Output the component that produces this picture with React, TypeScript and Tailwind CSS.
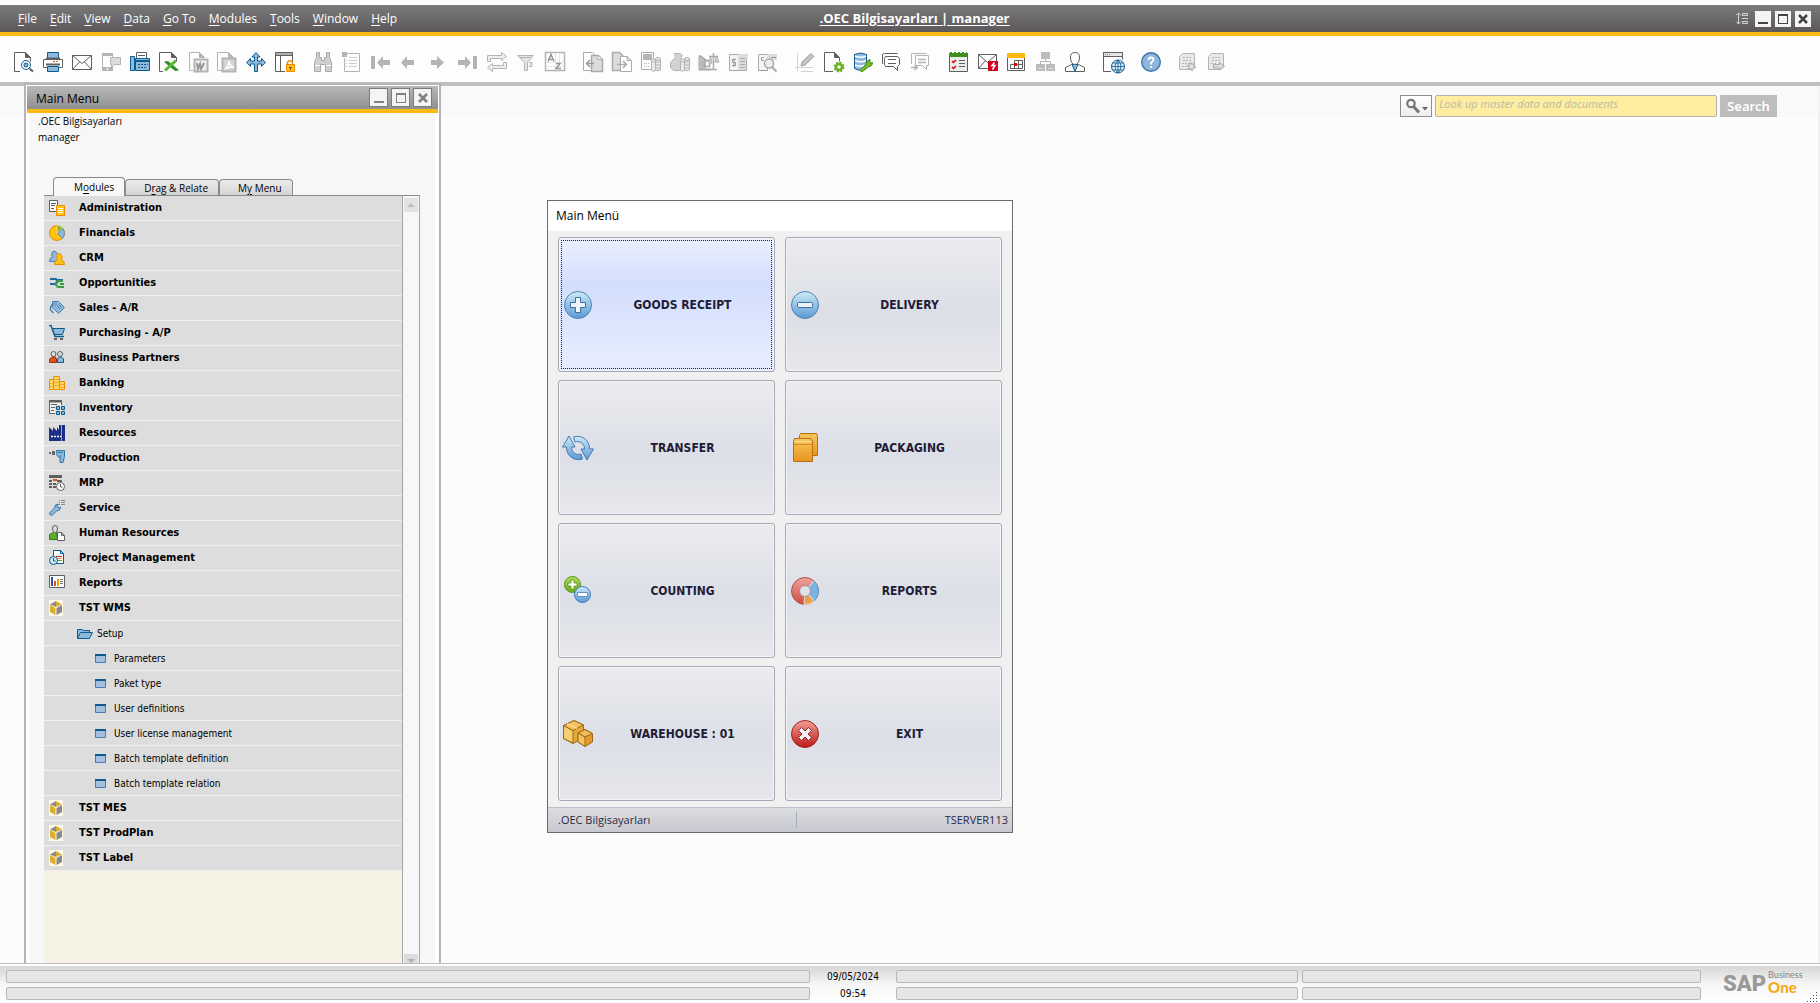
import { useState } from 'react';
import type { ReactNode } from 'react';

interface MenuItem {
  label: string;
  icon: string;
  level: number;
}

interface Tile {
  label: string;
  icon: string;
}

const G = '#b4b4b4'; // disabled icon
const L = '#dcdcdc'; // disabled fill
const D = '#5f5f5f';
const B = '#0b5b8f';
const S = '#8fb8dd';

const MENUS: [string, string, string][] = [
  ['', 'F', 'ile'],
  ['', 'E', 'dit'],
  ['', 'V', 'iew'],
  ['', 'D', 'ata'],
  ['', 'G', 'o To'],
  ['', 'M', 'odules'],
  ['', 'T', 'ools'],
  ['', 'W', 'indow'],
  ['', 'H', 'elp'],
];

const TABS: [string, string, string][] = [
  ['M', 'o', 'dules'],
  ['D', 'r', 'ag & Relate'],
  ['M', 'y', ' Menu'],
];

const TOOL_GROUPS: string[][] = [
  ['Preview', 'Print', 'Mail', 'SMS', 'Fax', 'Excel', 'Word', 'PDF', 'Launch', 'Lock'],
  ['Find', 'Add', 'First', 'Previous', 'Next', 'Last', 'Refresh', 'Filter', 'Sort'],
  ['Base', 'Target', 'Profit', 'Payment', 'Volume', 'Journal', 'Journal Preview'],
  ['Edit Layout', 'Settings', 'Query', 'Messages', 'Reply'],
  ['Tasks', 'Alerts', 'Calendar', 'Org Chart', 'Employee'],
  ['Browser'],
  ['Help'],
  ['Customize', 'Export'],
];

const ITEMS: MenuItem[] = [
  { label: 'Administration', icon: 'admin', level: 0 },
  { label: 'Financials', icon: 'pie', level: 0 },
  { label: 'CRM', icon: 'crm', level: 0 },
  { label: 'Opportunities', icon: 'opp', level: 0 },
  { label: 'Sales - A/R', icon: 'tag', level: 0 },
  { label: 'Purchasing - A/P', icon: 'cart', level: 0 },
  { label: 'Business Partners', icon: 'partners', level: 0 },
  { label: 'Banking', icon: 'bank', level: 0 },
  { label: 'Inventory', icon: 'inventory', level: 0 },
  { label: 'Resources', icon: 'factory', level: 0 },
  { label: 'Production', icon: 'drill', level: 0 },
  { label: 'MRP', icon: 'mrp', level: 0 },
  { label: 'Service', icon: 'wrench', level: 0 },
  { label: 'Human Resources', icon: 'hr', level: 0 },
  { label: 'Project Management', icon: 'project', level: 0 },
  { label: 'Reports', icon: 'reports', level: 0 },
  { label: 'TST WMS', icon: 'cube', level: 0 },
  { label: 'Setup', icon: 'folder', level: 1 },
  { label: 'Parameters', icon: 'form', level: 2 },
  { label: 'Paket type', icon: 'form', level: 2 },
  { label: 'User definitions', icon: 'form', level: 2 },
  { label: 'User license management', icon: 'form', level: 2 },
  { label: 'Batch template definition', icon: 'form', level: 2 },
  { label: 'Batch template relation', icon: 'form', level: 2 },
  { label: 'TST MES', icon: 'cube', level: 0 },
  { label: 'TST ProdPlan', icon: 'cube', level: 0 },
  { label: 'TST Label', icon: 'cube', level: 0 },
];

const TILES: Tile[] = [
  { label: 'GOODS RECEIPT', icon: 'plus' },
  { label: 'DELIVERY', icon: 'minus' },
  { label: 'TRANSFER', icon: 'transfer' },
  { label: 'PACKAGING', icon: 'packaging' },
  { label: 'COUNTING', icon: 'counting' },
  { label: 'REPORTS', icon: 'donut' },
  { label: 'WAREHOUSE : 01', icon: 'boxes' },
  { label: 'EXIT', icon: 'exit' },
];

const coins = (
  <g fill="#e8e8e8" stroke={G}>
    <path d="M10.500 8.500v10q2 1.500 4 0v-10z" />
    <ellipse cx="12.500" cy="8.500" rx="2.500" ry="1.500" />
    <path d="M14.500 7v11q2.500 1.500 5 0v-11z" />
    <ellipse cx="17" cy="7" rx="2.500" ry="1.500" />
    <path d="M14.500 10h5M14.500 13h5M14.500 16h5" />
  </g>
);

// 20x20 toolbar drawings
const toolIcons: Record<string, ReactNode> = {
  Preview: (
    <g fill="none" stroke={D}>
      <path d="M6 19.500H.5V.5h11l5 5v4" />
      <path d="M11.500 .5v5h5z" fill={D} />
      <circle cx="12" cy="13" r="4.500" stroke={B} fill="#fff" />
      <circle cx="12" cy="13" r="2" stroke={B} fill={S} />
      <path d="M15.500 16.500l3.500 3" stroke={D} strokeWidth="2" />
    </g>
  ),
  Print: (
    <g>
      <path d="M4.500 .5h11v6h-11z" fill={S} stroke={B} />
      <path d="M.5 7.500h19v8H.5z" fill="#fff" stroke={D} />
      <path d="M3 6.500h14" stroke={D} strokeWidth="2" />
      <path d="M10 9.500h2" stroke="#d33" />
      <path d="M13 9.500h2" stroke="#6a3" />
      <path d="M3 12.500h14" stroke={D} strokeWidth="2" />
      <path d="M4.500 14.500h11v5h-11z" fill={S} stroke={B} />
    </g>
  ),
  Mail: (
    <g fill="#fff" stroke={D}>
      <path d="M.5 3.500h19v14H.5z" />
      <path d="M.5 3.500l9.500 8 9.500-8M.5 17.500l7-7.500M19.500 17.500l-7-7.500" fill="none" />
    </g>
  ),
  SMS: (
    <g>
      <path d="M1.500 1.500h10v17h-10z" fill="#fff" stroke={G} />
      <path d="M1 1h11v3H1zM1 15h11v4H1z" fill={G} />
      <circle cx="6.500" cy="17" r="1" fill="#fff" />
      <path d="M9.500 5.500h10v7h-6l-3 3v-3h-1z" fill={L} stroke={G} />
    </g>
  ),
  Fax: (
    <g>
      <path d="M6.500 .5h10v7h-10z" fill="#fff" stroke={D} />
      <path d="M8 3.500h7" stroke={D} />
      <path d="M.5 4.500h4v14h-4z" fill={S} stroke={B} />
      <path d="M5.500 6.500h14v12h-14z" fill={S} stroke={B} />
      <path d="M6 9h13" stroke={B} strokeWidth="2" />
      <path d="M8 12.500h2m1 0h2m1 0h2M8 15.500h2m1 0h2m1 0h2" stroke={B} />
      <path d="M17 12.500h1" stroke="#e33" />
    </g>
  ),
  Excel: (
    <g fill="none" stroke={D}>
      <path d="M4 19.500H.5V.5h12l5 5v4" />
      <path d="M12.500 .5v5h5z" fill={D} />
      <path d="M6 9.500l11 9M8 9.500l11 9" stroke="#2f8f2f" strokeWidth="2" />
      <path d="M17 8.500l-11 10" stroke="#5cb531" strokeWidth="3" />
    </g>
  ),
  Word: (
    <g fill="none" stroke={G}>
      <path d="M5 18.500H1.500V.5h10l5 5" />
      <path d="M11.500 .5v5h5z" fill={G} />
      <path d="M6.500 7.500h13v12h-13z" fill="#eee" strokeWidth="2" />
      <path d="M9 11l1 6 2-5 1 5 3-6" stroke="#999" strokeWidth="2" />
    </g>
  ),
  PDF: (
    <g fill="none" stroke={G}>
      <path d="M5 18.500H.5V.5h11l5 5" />
      <path d="M11.500 .5v5h5z" fill={G} />
      <path d="M5.500 6.500h13v13h-13z" fill="#d4d4d4" strokeWidth="2" />
      <path d="M8 17q4-3 4-8 1 6 5 6-5-.5-9 2" stroke="#fff" strokeWidth="1.500" />
    </g>
  ),
  Launch: (
    <path
      d="M10 .5l4 4.500h-2.500v4H15.500V6.500l4 4-4 4V12H11.500v7.500h-3V12H4.500v2.500l-4-4 4-4V9h4V5H6z"
      fill={S}
      stroke={B}
    />
  ),
  Lock: (
    <g>
      <path d="M.5 .5h17v19H.5z" fill="#fff" stroke={D} />
      <path d="M0 0h18v4H0z" fill={D} />
      <path d="M1 2h16" stroke="#fff" />
      <path d="M5.500 4v15" stroke={D} />
      <path d="M10 9h10v11H10z" fill="#fff" />
      <path d="M12.500 12v-2q3-2.500 5 0v2" fill="none" stroke="#e88a00" strokeWidth="1.500" />
      <path d="M11.500 12.500h8v7h-8z" fill="#ffc20e" stroke="#e88a00" />
      <path d="M14 15.500h3M15.500 15v3" stroke="#844" />
    </g>
  ),
  Find: (
    <g fill="#cfcfcf" stroke="#aaa">
      <path d="M3.500 .5h3v5h2v3h3v-3h2v-5h3v5l2 5v9h-6v-7h-5v7h-6v-9l2-5z" />
      <path d="M2 13.500h5M13 13.500h5" stroke="#fff" />
    </g>
  ),
  Add: (
    <g fill="none" stroke={G}>
      <path d="M4 1.500h13.500v18H2.500V6" />
      <path d="M0 0h5v5H0z" fill={G} stroke="none" />
      <path d="M7 5.500h8M7 8.500h8M7 11.500h8M7 14.500h8" stroke="#ccc" />
      <path d="M4 8.500h1M4 11.500h1M4 14.500h1" />
    </g>
  ),
  First: <path d="M0 4h4v13H0zM6 10.500L12 4v4h7v5h-7v4z" fill={G} />,
  Previous: <path d="M1 10.500L7 4v4h7v5H7v4z" fill={G} />,
  Next: <path d="M15 10.500L8 4v4H2v5h6v4z" fill={G} />,
  Last: <path d="M15 4h4v13h-4zM13 10.500L7 4v4H0v5h7v4z" fill={G} />,
  Refresh: (
    <path
      d="M.5 9.500V3.500h14V.5l5 4-5 4V6.500h-11v3zM19.500 10.500v6h-14v3l-5-4 5-4v2h11v-3z"
      fill="#eee"
      stroke={G}
    />
  ),
  Filter: (
    <path d="M1.500 3.500h16l-6 7v8h-3v-8zM4 5.500h11M13 10.500h3v4h-3" fill="#e4e4e4" stroke={G} />
  ),
  Sort: (
    <g fill="none" stroke={G}>
      <path d="M.5 .5h19v18H.5z" fill="#fff" strokeWidth="1.500" />
      <path d="M10.500 2v15M2 10.500h16M2 14.500h16M14.500 2v15" stroke="#e5e5e5" />
      <path d="M3 9.500l3-7 3 7M4 7.500h4" stroke="#999" strokeWidth="1.500" />
      <path d="M11 11.500h4l-4 5h5" stroke="#999" strokeWidth="1.500" />
    </g>
  ),
  Base: (
    <g stroke="#aaa">
      <path d="M.5 .5h9l3 3v15H.5z" fill="#fff" />
      <path d="M8.500 3.500h7l4 4v12h-11z" fill={L} strokeWidth="1.500" />
      <path d="M15 3.500v4h4" fill="#fff" />
      <path d="M3 11.500h8M7 8l-3.500 3.500L7 15" fill="none" stroke="#999" strokeWidth="1.500" />
    </g>
  ),
  Target: (
    <g stroke="#aaa">
      <path d="M.5 .5h7l4 4v14H.5z" fill={L} strokeWidth="1.500" />
      <path d="M8.500 4.500h7l4 4v11h-11z" fill="#fff" />
      <path d="M15 4.500v4h4" fill={L} />
      <path d="M5 12.500h9M11 9l3.500 3.500L11 16" fill="none" strokeWidth="1.500" />
    </g>
  ),
  Profit: (
    <g>
      <path d="M.5 .5h12v17H.5z" fill="#fff" stroke="#aaa" />
      <path d="M2 2h9v6H2z" fill={G} />
      <path d="M3 11.500h6M3 14.500h6" stroke={G} strokeDasharray="1 1" />
      {coins}
    </g>
  ),
  Payment: (
    <g>
      <path d="M4.500 1.500h6l2 2-2 3 4 5v6l-3 1h-8l-3-3v-5l5-5z" fill="#d2d2d2" stroke={G} />
      {coins}
    </g>
  ),
  Volume: (
    <g fill="none" stroke="#aaa">
      <path d="M.5 3.500l8 6M.5 3.500v14h11" strokeWidth="2" />
      <path d="M0 4l7 6v7H0z" fill="#bbb" stroke="none" />
      <path d="M5.500 8.500h5v6h-5zM14.500 1v17M11 17.500h7M10 4.500h9" strokeWidth="1.500" />
      <path d="M11.500 5l-1.500 6h3zM17.500 4l-1.500 6h4z" fill={L} />
    </g>
  ),
  Journal: (
    <g fill="none" stroke="#aaa">
      <path d="M1.500 2.500h9v16h-9zM10.500 2.500h8v16h-8z" fill="#f4f4f4" />
      <path d="M10 2h10v5h-2v11h-8z" fill={L} stroke="none" />
      <path d="M12 6.500h5M12 9.500h5M12 12.500h5M12 15.500h5" />
      <path d="M8 7.500H4.500v3h3v3H4M6 6v9" stroke="#999" />
    </g>
  ),
  'Journal Preview': (
    <g fill="none" stroke="#aaa">
      <path d="M1.500 2.500h9v16h-9z" fill="#f4f4f4" />
      <path d="M10 2h10v6h-3v7h-7z" fill={L} stroke="none" />
      <path d="M1.500 18.500h9M7 5.500H4.500v3H7M14 5.500h5" stroke="#999" />
      <circle cx="12" cy="11.500" r="4.500" fill="#eee" strokeWidth="1.500" />
      <path d="M15 15l4.500 4.500" strokeWidth="2" />
    </g>
  ),
  'Edit Layout': (
    <g fill="none" stroke="#cfd8cf">
      <path d="M2.500 1v18M0 15.500h18M6 19.500h12" />
      <path d="M6 14l1-4 9-8.500 3 3L10 13z" fill="#c4c4c4" stroke="#a0a0a0" />
    </g>
  ),
  Settings: (
    <g fill="none" stroke={D}>
      <path d="M9 19.500H.5V.5h10l5 5v4" />
      <path d="M10.500 .5v5h5z" fill={D} />
      <circle cx="15" cy="15" r="3" stroke="#6ab023" strokeWidth="2.500" />
      <circle cx="15" cy="15" r="4.500" stroke="#6ab023" strokeWidth="2" strokeDasharray="2 1.530" />
    </g>
  ),
  Query: (
    <g>
      <path d="M1.500 2.500v14q6 3.500 12 0v-14q-6-3-12 0z" fill={S} stroke={B} />
      <path d="M2 4q6 2.500 11 0M2 8.500q6 2.500 11 0M2 13q6 2.500 9 0" fill="none" stroke="#fff" strokeWidth="1.500" />
      <path d="M7 18.500l6-6q0-4 4-5v4l2.500-1q0 4-4.500 4.500l-6 5z" fill="#7dc023" stroke="#3e8a1c" />
    </g>
  ),
  Messages: (
    <g fill="#fff" stroke={D}>
      <path d="M.5 12V2.500l2-1h13" fill="none" />
      <path d="M3.500 4.500h12l2 2v6l-2 2v4l-4-4h-8l-1-2v-6z" />
      <path d="M6 7.500h8M6 11.500h8" />
    </g>
  ),
  Reply: (
    <g fill="#fff" stroke={G}>
      <path d="M.5 12V1.500h15" fill="none" />
      <path d="M4.500 3.500h13v10h-2v4l-4-4h-7z" />
      <path d="M7 7.500h8M7 10.500h8M0 15.500h6M3.500 13l3 2.500-3 2.500" fill="none" strokeWidth="1.500" />
    </g>
  ),
  Tasks: (
    <g fill="none">
      <path d="M.5 1.500h18v18H.5z" fill="#ececec" stroke={D} />
      <path d="M0 1h19v4H0z" fill="#3f8f1f" />
      <path d="M1 .5h17" stroke="#3f8f1f" strokeDasharray="2 2" />
      <path d="M3 9l1.500 1.500L7 8M3 15l1.500 1.500L7 14" stroke="#d00" strokeWidth="1.500" />
      <path d="M10 8.500h6M10 11.500h6M10 14.500h6" stroke={D} />
    </g>
  ),
  Alerts: (
    <g>
      <path d="M.5 2.500h18v14H.5zM.5 2.500l9 8 9-8M.5 16.500l7-8" fill="#fff" stroke={D} />
      <path d="M10 9h10v10H10z" fill="#d0021b" />
      <path d="M16.500 10.500l-2.500 3h3l-2.500 4" fill="none" stroke="#fff" strokeWidth="1.500" />
    </g>
  ),
  Calendar: (
    <g>
      <path d="M.5 2.500h17v16H.5z" fill="#fff" stroke={D} />
      <path d="M0 1h18v5H0z" fill="#fdb913" />
      <path d="M3.500 12.500h12v4h-12zM7.500 8.500h8v4h-8zM7.500 12v4M11.500 8v8" fill="none" stroke={D} />
      <path d="M7 11h3v3H7z" fill="#d00" />
    </g>
  ),
  'Org Chart': (
    <g fill="#bcbcbc">
      <path d="M5 0h9v7H5zM0 12h9v7H0zM10 12h9v7h-9z" />
      <path d="M9.500 7v3M4.500 12v-2.500h10V12" fill="none" stroke={G} />
      <path d="M2 16.500h5M12 16.500h5" stroke="#ddd" />
    </g>
  ),
  Employee: (
    <g fill="#fff" stroke={D}>
      <path d="M.5 19.500v-4l6-3h7l6 3v4z" />
      <path d="M7 12.500l3 7 3-7z" fill={S} stroke={B} />
      <path d="M10 .5q5 0 4.500 5.500Q14 12.500 10 12.500T5.500 6Q5 .5 10 .5z" />
    </g>
  ),
  Browser: (
    <g fill="none">
      <path d="M8 19.500H.5V.5h19v7" stroke={D} />
      <path d="M.5 .5h19v4H.5z" fill="#e5e5e5" stroke={D} />
      <path d="M2 2.500h1m1 0h1m1 0h1" stroke="#6a3" />
      <circle cx="15" cy="14.500" r="6.500" fill="#dceaf6" stroke={B} />
      <path d="M8.500 14.500h13M10 11h10M10 18h10M15 8v13M15 8q-6 6.500 0 13M15 8q6 6.500 0 13" stroke={B} strokeWidth=".8" />
    </g>
  ),
  Help: (
    <g>
      <circle cx="10" cy="10" r="9.300" fill="#8db4da" stroke="#3a76a8" strokeWidth="1.400" />
      <path d="M7.500 8q0-2.500 2.500-2.500t2.500 2.300Q12.500 9.500 10 10.500v2M10 14v2" fill="none" stroke="#fff" strokeWidth="1.800" />
    </g>
  ),
  Customize: (
    <g>
      <path d="M.5 4.500l3-3h12v13l-3 3H.5z" fill="#e9e9e9" stroke={G} />
      <path d="M4 5.500h9M4 8.500h9M3 11.500h9M3 14.500h7" stroke={G} strokeDasharray="2 1" />
      <circle cx="12.500" cy="14.500" r="3" fill="none" stroke="#b0b0b0" strokeWidth="2.500" strokeDasharray="2 1" />
    </g>
  ),
  Export: (
    <g>
      <path d="M.5 4.500l3-3h12v13l-3 3H.5z" fill="#e9e9e9" stroke={G} />
      <path d="M4 5.500h9M4 8.500h9M3 11.500h5" stroke={G} strokeDasharray="2 1" />
      <path d="M5.500 12.500h6v-2l5 4-5 3.500v-2h-6z" fill="#ddd" stroke="#a8a8a8" />
    </g>
  ),
};

// 16x16 module drawings
const moduleIcons: Record<string, ReactNode> = {
  admin: (
    <g>
      <path d="M.5 .5h8v11h-8z" fill="#fff" stroke={D} />
      <path d="M2 3.500h5M2 5.500h4M2 8.500h3" stroke={D} />
      <path d="M7.500 5.500h8v10h-8z" fill="#ffc90e" stroke="#f08a00" />
      <path d="M9 8.500h5M9 10.500h5M9 12.500h5" stroke="#fff" />
    </g>
  ),
  pie: (
    <g>
      <circle cx="8" cy="8" r="7.500" fill="#ffc20e" stroke="#f08a00" />
      <path d="M8 8V.5q4 0 5.500 2.500z" fill="#7db928" stroke="#fff" strokeWidth=".5" />
      <path d="M8.500 8.500L13.500 3.500q4 5 0 10z" fill={S} stroke="#4a7fb0" strokeWidth=".7" />
    </g>
  ),
  crm: (
    <g>
      <path d="M.5 11.500q0-4 3-4.500Q2 5 3 2.500t4-.5 1 5q3 0 3 4.500z" fill={S} stroke="#4a7fb0" />
      <path d="M5.500 14.500q0-4 3-4.500Q7 7 8 4.500t4 0 0 5q3.500 1 3.500 5z" fill="#ffc20e" stroke="#f08a00" />
    </g>
  ),
  opp: (
    <g fill="none" strokeWidth="2">
      <path d="M1 4h6l2 4M1 9h6l2-4h5" stroke="#1d6ca5" />
      <path d="M14 6H9Q6 8 7 10t3 2h5M11 9h4" stroke="#3a9a48" />
    </g>
  ),
  tag: (
    <g>
      <path d="M3.500 1.500h6l6 6-6 6-6-6z" fill={S} stroke="#4a7fb0" />
      <circle cx="6" cy="4" r="1.200" fill="#fff" stroke={B} strokeWidth=".7" />
      <path d="M4 4Q1 6 1.500 10l3 3" fill="none" stroke="#4a7fb0" strokeWidth="1.500" />
      <path d="M8 6l3 3M9.500 4.500l3 3" stroke="#4a7fb0" />
    </g>
  ),
  cart: (
    <g>
      <path d="M0 .5h2l4 11h9" fill="none" stroke={B} strokeWidth="1.500" />
      <path d="M3.500 3.500h12l-2 6h-8z" fill={S} stroke={B} />
      <path d="M5 13h3v2H5zM11 13h3v2h-3z" fill="#666" />
    </g>
  ),
  partners: (
    <g>
      <circle cx="4.500" cy="4" r="2.500" fill="#ddd" stroke={D} />
      <circle cx="11" cy="4" r="2.500" fill="#ddd" stroke={D} />
      <path d="M.5 12.500V9l3-2h3l1 2v3.500z" fill="#d9531e" stroke="#a03010" />
      <path d="M8.500 12.500V9l2-2h2l2 2v3.500z" fill={S} stroke={B} />
    </g>
  ),
  bank: (
    <g fill="#ffd766" stroke="#f08a00">
      <path d="M4.500 1.500h6v13h-6z" />
      <path d="M.5 4.500h4v10h-4zM10.500 6.500h5v8h-5z" />
      <path d="M5 4.500h5M5 7.500h5M5 10.500h5M1 8.500h3M1 11.500h3M11 9.500h4M11 12.500h4" strokeWidth=".6" />
    </g>
  ),
  inventory: (
    <g>
      <path d="M.5 .5h12v13H.5z" fill="#f4f4f4" stroke={D} />
      <path d="M0 1.500h13" stroke={D} strokeWidth="2" />
      <path d="M2 4.500h6M2 7.500h4M2 10.500h3" stroke={D} />
      <path d="M6 5h10v11H6z" fill="#ddd" />
      <path d="M7.500 6.500h3v3h-3zM12.500 6.500h3v3h-3zM7.500 11.500h3v3h-3zM12.500 11.500h3v3h-3z" fill={S} stroke={B} />
    </g>
  ),
  factory: (
    <g>
      <path d="M0 16V2l4 4V2l4 4V2l2 3V0h2v7h1V0h3v16z" fill="#1c2f87" />
      <path d="M2 11.500h10" stroke="#fff" strokeWidth="1.500" strokeDasharray="2 1" />
      <path d="M12.500 0v16" stroke="#8fa8dd" />
    </g>
  ),
  drill: (
    <g>
      <path d="M0 2h2v2H0zM3 1h3v4H3z" fill="#666" />
      <path d="M7.500 .5h8v6l-1.500 6h-3v-4l-3-3z" fill={S} stroke="#2f77a8" />
      <path d="M9 2.500h5M11 5v3" stroke="#2f77a8" />
    </g>
  ),
  mrp: (
    <g>
      <path d="M0 0h13v3H0z" fill={D} />
      <path d="M0 5h3v2H0zM8 5h5v2H8zM0 8h3v2H0zM4 8h3v2H4zM0 11h3v2H0zM4 11h3v2H4z" fill={D} />
      <path d="M4 4h4v2H4z" fill="#e0561a" />
      <circle cx="11.500" cy="11.500" r="4" fill="#fff" stroke={D} />
      <path d="M11.500 9v3h2" fill="none" stroke={D} />
    </g>
  ),
  wrench: (
    <g>
      <path d="M.5 13l5-5q0-4 4-4L8 6.500 10 8l1.500-1q0 4-4 4L3 15.500q-2 0-2.500-2.500z" fill={S} stroke="#2f77a8" />
      <path d="M10 .5h1m1 0h4M10 2.500h1m1 0h4M10 4.500h1m1 0h4" stroke="#888" />
    </g>
  ),
  hr: (
    <g>
      <path d="M.5 14.500v-5l4-2h3l1 7z" fill="#5fae2c" stroke="#2f7a1c" />
      <path d="M6 .5q3 0 2.500 3.500Q8 8 6 8T3.500 4Q3 .5 6 .5z" fill="#ddd" stroke={D} />
      <path d="M8.500 7.500h4l3 3v5h-7zM12.500 7.500v3h3" fill="#fff" stroke={D} />
    </g>
  ),
  project: (
    <g>
      <path d="M4.500 .5h7l3 3v10h-10zM11.500 .5v3h3" fill="#fff" stroke={B} />
      <path d="M7 6.500h6" stroke="#d22" />
      <path d="M8 8.500h5" stroke="#f90" />
      <path d="M8 10.500h5" stroke="#3a3" />
      <circle cx="4.500" cy="10.500" r="4" fill="#d4e5f4" stroke={B} />
      <path d="M4.500 8v3h2" fill="none" stroke={B} />
    </g>
  ),
  reports: (
    <g>
      <path d="M.5 .5h15v12H.5z" fill="#fff" stroke={D} />
      <path d="M3 2v9" stroke="#1e5aa0" strokeWidth="2" />
      <path d="M6 6v5" stroke="#d9531e" strokeWidth="2" />
      <path d="M9 4v7" stroke="#f5a100" strokeWidth="2" />
      <path d="M11 4.500h3M11 6.500h3M11 8.500h3" stroke="#777" />
    </g>
  ),
  cube: (
    <g>
      <path d="M0 0h14v16H0z" fill="#fdf8e8" />
      <path d="M7 1v6L1 4.500z" fill="#8a8a8a" />
      <path d="M7 1l6 3.500L7 7z" fill="#dfae28" />
      <path d="M1 5l5.500 3v7L1 12z" fill="#dfae28" />
      <path d="M13 5L7.500 8v7l5.500-3z" fill="#8a8a8a" />
    </g>
  ),
  folder: (
    <g fill={S} stroke={B}>
      <path d="M.5 10.500v-9h5l1 1h6v2" />
      <path d="M.5 10.500l3-6h12l-3 6z" />
    </g>
  ),
  form: (
    <g>
      <path d="M.5 .5h10v8H.5z" fill="#a4c0de" stroke="#4a7ab0" />
      <path d="M0 1h11" stroke={B} strokeWidth="2" />
    </g>
  ),
};

// 32x32 tile drawings
const tileIcons: Record<string, ReactNode> = {
  plus: (
    <g>
      <circle cx="16" cy="16" r="13.500" fill="url(#blue)" stroke="#4f82b8" />
      <path d="M13.500 8.500h5v5h5v5h-5v5h-5v-5h-5v-5h5z" fill="#eef3fa" stroke="#3d6da8" strokeLinejoin="round" />
    </g>
  ),
  minus: (
    <g>
      <circle cx="16" cy="16" r="13.500" fill="url(#blue)" stroke="#4f82b8" />
      <rect x="8.500" y="13.500" width="15" height="5" rx="1" fill="#eef3fa" stroke="#3d6da8" />
    </g>
  ),
  transfer: (
    <g fill="url(#blue)" stroke="#4878b4" strokeLinejoin="round">
      <path d="M7 4l6 11H9.500A7 7 0 0 0 19 22l1.500 5A12 12 0 0 1 4.500 15H.5z" />
      <path d="M25 28l-6-11h3.500A7 7 0 0 0 13 10L11.500 5A12 12 0 0 1 27.500 17h4z" />
    </g>
  ),
  packaging: (
    <g stroke="#b86f10">
      <path d="M11.500 1.500h16l1 2v20h-18v-20z" fill="url(#orange)" />
      <path d="M5.500 6.500h16l2 3v20h-19v-20z" fill="url(#orange)" />
      <path d="M5 12.500h18.500" stroke="#d48a1c" />
      <path d="M5.500 9.500h17" stroke="#fbdf94" />
    </g>
  ),
  counting: (
    <g>
      <circle cx="10.500" cy="9.500" r="8" fill="url(#green)" stroke="#5b9414" />
      <path d="M9 5h3v3h3v3h-3v3H9v-3H6V8h3z" fill="#fff" stroke="#4d8a10" strokeWidth=".7" />
      <circle cx="20.500" cy="19.500" r="8" fill="url(#blue)" stroke="#3e78c0" />
      <path d="M15.500 17.500h10v4h-10z" fill="#fff" stroke="#3d6da8" strokeWidth=".7" />
    </g>
  ),
  donut: (
    <g>
      <circle cx="16" cy="16" r="13.500" fill="url(#red)" stroke="#a8544c" />
      <path d="M16 16L25 6A13.500 13.500 0 0 1 25 26z" fill="#78b4e2" stroke="#e8eef6" />
      <path d="M16 16L25 26A13.500 13.500 0 0 1 15 29.500z" fill="#e8a04c" stroke="#f4dcc0" />
      <path d="M25 6A13.500 13.500 0 0 1 25 26" fill="none" stroke="#4f82b8" />
      <circle cx="16" cy="16" r="5.500" fill="#dfe2ea" stroke="#b08a90" />
    </g>
  ),
  boxes: (
    <g stroke="#9a6a18" strokeLinejoin="round">
      <path d="M12 2.500l9.500 4.500v13L11 25.500 1.500 20.500V7.500z" fill="#e6a83a" />
      <path d="M1.500 7.500l9.500 5V25L1.500 20.500z" fill="#f6cf6c" />
      <path d="M12 2.500L21.500 7 11 12.500l-9.500-5z" fill="#f3c25c" />
      <path d="M5 5.500l10 5" stroke="#fbe7b4" />
      <path d="M23 11.500l7.500 4v8.500L23 28.500l-7-4.500v-9z" fill="#e29a2a" />
      <path d="M16 15l7 4v9.500L16 24z" fill="#f4c45c" />
      <path d="M23 11.500l7.500 4-7.500 3.500-7-4z" fill="#f0bb52" />
    </g>
  ),
  exit: (
    <g>
      <circle cx="16" cy="16" r="13.500" fill="url(#crimson)" stroke="#a82020" />
      <path
        d="M12.500 9.500l3.500 3.500 3.500-3.500 3 3-3.500 3.500 3.500 3.500-3 3-3.500-3.500-3.500 3.500-3-3 3.500-3.500-3.500-3.500z"
        fill="#f2f2f6"
        stroke="#9c2430"
        strokeLinejoin="round"
      />
    </g>
  ),
};

const gradients: [string, string, string][] = [
  ['blue', '#cdebf7', '#5a9ad2'],
  ['orange', '#f6c860', '#e8941c'],
  ['green', '#b4dc5c', '#6aa81c'],
  ['red', '#eea49c', '#cc4a40'],
  ['crimson', '#f0a096', '#bc1818'],
];

function Mnemonic({ parts }: { parts: [string, string, string] }) {
  return (
    <>
      {parts[0]}
      <span className="underline underline-offset-2">{parts[1]}</span>
      {parts[2]}
    </>
  );
}

function WindowGlyph({ kind, size }: { kind: string; size: number }) {
  return (
    <svg width={size} height={size} viewBox="0 0 12 12" fill="none" stroke="currentColor" shapeRendering="crispEdges">
      {kind === 'Minimize' && <path d="M1 10h10" strokeWidth="2" />}
      {kind === 'Maximize' && <path d="M1 1.500h10M1.500 1v10M10.500 1v10M1 10.500h10M1 2.500h10" />}
      {kind === 'Close' && <path d="M2 2l8 8M10 2l-8 8" strokeWidth="2.500" shapeRendering="auto" />}
    </svg>
  );
}

function TitleBar() {
  return (
    <header className="mt-[5px] flex h-[31px] items-center border-b-4 border-[#fdb913] bg-linear-to-b from-[#7b7b7a] to-[#5b575b] pr-[9px] pl-[18px] font-['Open_Sans',sans-serif] text-white">
      <nav className="flex flex-1 gap-[13px]">
        {MENUS.map((m) => (
          <button key={m[1]} className="text-xs">
            <Mnemonic parts={m} />
          </button>
        ))}
      </nav>
      <a href="#company" className="text-[13px] font-bold underline underline-offset-2">
        .OEC Bilgisayarları | manager
      </a>
      <div className="flex flex-1 items-center justify-end gap-1">
        <svg width="14" height="13" viewBox="0 0 14 13" fill="none" stroke="#d5d5d5" className="mr-0.5">
          <path d="M3.500 1v11M1 3.500L3.500 1 6 3.500M1 9.500L3.500 12 6 9.500M7 6.500h6" />
          <path d="M7.500 1.500h5v2h-5zM7.500 9.500h5v2h-5z" />
        </svg>
        {['Minimize', 'Maximize', 'Close'].map((k) => (
          <button key={k} aria-label={k} className="flex size-4 items-center justify-center bg-[#f4f4f4] text-[#444]">
            <WindowGlyph kind={k} size={12} />
          </button>
        ))}
      </div>
    </header>
  );
}

function Toolbar() {
  return (
    <div className="flex h-[50px] items-center gap-[18px] border-b-4 border-[#bfbfbf] bg-[#fdfdfd] px-[14px] pt-1.5">
      {TOOL_GROUPS.map((group, i) => (
        <div key={i} className="flex gap-[9px]">
          {group.map((name) => (
            <button key={name} aria-label={name} className="size-5">
              <svg width="20" height="20" viewBox="0 0 20 20" className="overflow-visible">
                {toolIcons[name]}
              </svg>
            </button>
          ))}
        </div>
      ))}
    </div>
  );
}

function SearchBar() {
  return (
    <div className="flex h-[31px] items-end justify-end gap-[3px] bg-[#f9f9f9] pr-[41px]">
      <button
        aria-label="Search scope"
        className="flex h-[22px] w-8 items-center justify-center gap-px border border-[#8e8e8e] bg-linear-to-b from-white to-[#eee]"
      >
        <svg width="16" height="16" viewBox="0 0 16 16" fill="none" stroke="#777">
          <circle cx="6" cy="5.500" r="3.700" strokeWidth="2.200" />
          <path d="M8.500 8.500l5.500 6" strokeWidth="3" />
        </svg>
        <svg width="6" height="4" viewBox="0 0 6 4" className="mt-1.5">
          <path d="M0 0h6L3 3.500z" fill="#666" />
        </svg>
      </button>
      <input
        aria-label="Search"
        placeholder="Look up master data and documents"
        className="h-[22px] w-[282px] rounded-xs border border-[#b3b3b3] bg-[#ffee9f] px-[3px] pb-[5px] font-['Open_Sans',sans-serif] text-[11px] italic outline-none placeholder:text-[#b9b9a8]"
      />
      <button className="h-[22px] w-[57px] bg-[#bdbdbd] font-['Noto_Sans',sans-serif] text-[13px] leading-none font-semibold text-white">
        Search
      </button>
    </div>
  );
}

function MenuRow({ item }: { item: MenuItem }) {
  const pad = item.level === 0 ? 'pl-[5px]' : item.level === 1 ? 'pl-[33px]' : 'pl-[51px]';
  const w = item.level === 0 ? 'w-[30px]' : item.level === 1 ? 'w-[20px]' : 'w-[19px]';
  const size = item.icon === 'form' ? 'h-[9px] w-[11px]' : item.icon === 'folder' ? 'h-[11px] w-4' : 'size-4';
  const box = item.icon === 'form' ? '0 0 11 9' : item.icon === 'folder' ? '0 0 16 11' : '0 0 16 16';
  return (
    <li>
      <button
        className={`flex h-[25px] w-full items-center border-b border-[#efefef] bg-[#dddddd] text-left font-['DejaVu_Sans_Condensed','DejaVu_Sans',sans-serif] text-black ${pad} ${
          item.level === 0 ? 'text-[11px] font-bold' : 'text-[10px]'
        }`}
      >
        <span className={w}>
          <svg viewBox={box} className={size}>
            {moduleIcons[item.icon]}
          </svg>
        </span>
        {item.label}
      </button>
    </li>
  );
}

function MainMenuWindow() {
  const [tab, setTab] = useState(0);

  return (
    <section className="absolute -top-[3px] bottom-0 left-[24px] flex w-[417px] flex-col overflow-hidden border-x-2 border-t-2 border-[#b5b5b5] bg-white px-px pt-px">
      <div className="flex h-[27px] shrink-0 items-center gap-[3px] border-b-4 border-[#fdb913] bg-linear-to-b from-[#b9b9b9] to-[#8f8f8f] pr-1.5 pl-[9px]">
        <h2 className="flex-1 pt-0.5 font-['Open_Sans',sans-serif] text-xs text-black">Main Menu</h2>
        {['Minimize', 'Maximize', 'Close'].map((k) => (
          <button
            key={k}
            aria-label={k}
            className="flex size-[19px] items-center justify-center border border-[#7c7c7c] bg-[#f4f4f4] text-[#808080]"
          >
            <WindowGlyph kind={k} size={12} />
          </button>
        ))}
      </div>

      <div className="mx-[3px] flex min-h-0 flex-1 flex-col bg-[#f7f7f7] pr-[15px] pl-[14px]">
        <div className="-ml-1.5 flex h-16 shrink-0 flex-col font-['Open_Sans',sans-serif] text-[10px] leading-4 text-black">
          <span>.OEC Bilgisayarları</span>
          <span>manager</span>
        </div>

        <div className="flex h-[19px] shrink-0 items-end border-b border-[#8a8a8a] pl-[9px]">
          {TABS.map((t, i) => (
            <button
              key={t[2]}
              onClick={() => setTab(i)}
              className={`rounded-t border border-b-0 border-[#8a8a8a] pr-2.5 font-['Open_Sans',sans-serif] text-[10px] leading-none text-black ${
                tab === i ? '-mb-px h-[19px] bg-[#f7f7f7] pl-5' : 'h-4 bg-linear-to-b from-[#ececec] to-[#d4d4d4] pl-[18px]'
              }`}
            >
              <Mnemonic parts={t} />
            </button>
          ))}
        </div>

        <div className="flex min-h-0 flex-1">
          <ul className="flex-1 overflow-hidden bg-[#f5f2e4]">
            {ITEMS.map((item) => (
              <MenuRow key={item.label} item={item} />
            ))}
          </ul>
          <div className="flex w-[18px] flex-col items-center justify-between border-x border-[#a5a5a5] bg-[#f7f7f7] pt-0.5">
            <button aria-label="Scroll up" className="flex size-[14px] items-center justify-center bg-[#e2e2e2]">
              <svg width="8" height="4" viewBox="0 0 8 4">
                <path d="M4 0l4 4H0z" fill="#bdbdbd" />
              </svg>
            </button>
            <button aria-label="Scroll down" className="flex h-[9px] w-[14px] items-end justify-center bg-[#dcdcdc]">
              <svg width="8" height="4" viewBox="0 0 8 4">
                <path d="M0 0h8L4 4z" fill="#b0b0b0" />
              </svg>
            </button>
          </div>
        </div>
      </div>
    </section>
  );
}

function WmsWindow() {
  const [focused, setFocused] = useState(0);

  return (
    <section className="absolute top-[114px] left-[547px] flex w-[466px] flex-col border border-[#6b6b6b] bg-[#f0f0f0] font-['Open_Sans',sans-serif]">
      <h2 className="flex h-[30px] items-center bg-white pl-2 text-xs text-black">Main Menü</h2>
      <div className="grid grid-cols-2 gap-x-[10px] gap-y-2 px-[10px] py-1.5">
        {TILES.map((tile, i) => (
          <button
            key={tile.label}
            onClick={() => setFocused(i)}
            className={`flex h-[135px] rounded-[3px] border border-[#a6a9b4] p-0.5 font-['DejaVu_Sans_Condensed','DejaVu_Sans',sans-serif] text-xs font-bold text-[#1e1c36] shadow-[inset_0_0_0_1px_#f4f5f8] ${
              focused === i
                ? 'bg-linear-to-b from-[#ebf0fe] via-[#d3defc] via-35% to-[#e8eefe]'
                : 'bg-linear-to-b from-[#ebecef] via-[#dcdfe7] via-55% to-[#e7e8ec]'
            }`}
          >
            <span
              className={`flex size-full items-center border border-dotted ${
                focused === i ? 'border-[#1e1c36]' : 'border-transparent'
              }`}
            >
              <svg width="32" height="32" viewBox="0 0 32 32">
                {tileIcons[tile.icon]}
              </svg>
              <span className="flex-1">{tile.label}</span>
            </span>
          </button>
        ))}
      </div>
      <footer className="grid h-[25px] grid-cols-[238px_1fr] items-center border-t border-[#bcbec8] bg-linear-to-b from-[#dcdde2] to-[#c8c9d0] pr-1 pl-[10px] text-[11px] text-[#2b2940]">
        <span>.OEC Bilgisayarları</span>
        <span className="border-l border-[#a9abb5] text-right leading-4">TSERVER113</span>
      </footer>
    </section>
  );
}

function StatusField() {
  return <div className="h-[13px] rounded-xs border border-[#b8b8b8] bg-[#e6e6e6]" />;
}

function StatusBar() {
  return (
    <footer className="h-10 border-t border-[#bfbfbf] bg-white pt-0.5">
      <div className="flex h-full bg-linear-to-b from-[#d6d6d6] via-[#f6f6f6] via-50% to-white pt-1 pl-1.5">
        <div className="flex flex-[804] flex-col gap-1">
          <StatusField />
          <StatusField />
        </div>
        <div className="-mt-0.5 flex w-[86px] flex-col text-center font-['DejaVu_Sans_Condensed','DejaVu_Sans',sans-serif] text-[10px] leading-[17px] text-black">
          <time>09/05/2024</time>
          <time>09:54</time>
        </div>
        <div className="flex flex-[402] flex-col gap-1">
          <StatusField />
          <StatusField />
        </div>
        <div className="ml-1 flex flex-[399] flex-col gap-1">
          <StatusField />
          <StatusField />
        </div>
        <div className="flex w-[119px] items-start justify-between pl-[22px]">
          <div className="flex gap-0.5">
            <span className="font-['Roboto',sans-serif] text-[22px] leading-7 font-black text-[#999]">SAP</span>
            <span className="flex flex-col font-['Lato',sans-serif]">
              <span className="pt-px text-[9px] leading-2 font-medium text-[#8c8c8c]">Business</span>
              <span className="text-[15px] leading-4 font-black text-[#f5ab1c]">One</span>
            </span>
          </div>
          <svg width="12" height="12" viewBox="0 0 12 12" className="mr-0.5 self-end" fill="#555">
            {[0, 1, 2, 3].map((r) =>
              Array.from({ length: r + 1 }, (_, c) => (
                <rect key={`${r}-${c}`} x={10 - c * 3} y={1 + r * 3} width="1" height="1" />
              )),
            )}
          </svg>
        </div>
      </div>
    </footer>
  );
}

export default function App() {
  return (
    <div className="flex h-screen flex-col overflow-hidden bg-white">
      <svg width="0" height="0" className="absolute">
        <defs>
          {gradients.map(([id, from, to]) => (
            <linearGradient key={id} id={id} x1="0" y1="0" x2="0" y2="1">
              <stop offset="0" stopColor={from} />
              <stop offset="1" stopColor={to} />
            </linearGradient>
          ))}
        </defs>
      </svg>
      <TitleBar />
      <Toolbar />
      <main className="relative min-h-0 flex-1 border-r-2 border-[#f1f1f1] bg-[#fcfcfc]">
        <SearchBar />
        <MainMenuWindow />
        <WmsWindow />
      </main>
      <StatusBar />
    </div>
  );
}
